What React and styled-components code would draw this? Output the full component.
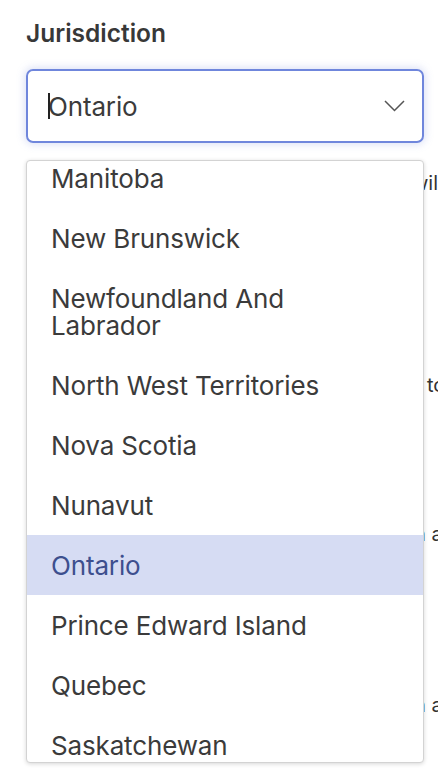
import React from "react";
import styled, { createGlobalStyle } from "styled-components";

const GlobalStyle = createGlobalStyle`
  html, body {
    margin: 0;
    overflow: hidden;
    background: #fff;
  }
  body {
    font-family: "Inter", "Noto Sans", sans-serif;
    color: #3b3b3b;
  }
`;

const Page = styled.div`
  padding: 18px 14px 0 26px;
  width: 438px;
  height: 778px;
  box-sizing: border-box;
`;

const Label = styled.div`
  font-size: 24.5px;
  line-height: 30px;
  font-weight: 600;
  color: #383838;
  margin-bottom: 21px;
`;

const Field = styled.div`
  position: relative;
`;

const Input = styled.div`
  height: 74px;
  box-sizing: border-box;
  border: 2px solid #6f86dc;
  border-radius: 7px;
  box-shadow: 0 0 8px 1px rgba(110, 132, 220, 0.28);
  display: flex;
  align-items: center;
  justify-content: space-between;
  padding: 0 17px 0 20px;
  font-size: 26px;
  letter-spacing: -0.15px;
  color: #3b3b3b;
`;

const Value = styled.div`
  display: flex;
  align-items: center;
`;

const Caret = styled.span`
  display: inline-block;
  width: 1.5px;
  height: 26px;
  background: #222;
  margin-right: -1.5px;
  position: relative;
  z-index: 1;
`;

const Menu = styled.div`
  position: absolute;
  top: calc(100% + 17px);
  left: 0;
  width: 398px;
  height: 603px;
  box-sizing: border-box;
  background: #fff;
  border: 1px solid #d3d3d3;
  border-radius: 4px;
  box-shadow: 0 1px 4px rgba(0, 0, 0, 0.16);
  overflow: hidden;
  z-index: 5;
`;

const List = styled.ul`
  list-style: none;
  margin: -13px 0 0;
  padding: 0;
`;

const Option = styled.li`
  font-size: 26px;
  line-height: 27px;
  letter-spacing: -0.15px;
  padding: 16.5px 40px 16.5px 24px;
  color: ${(p) => (p.$active ? "#3d4f8e" : "#3b3b3b")};
  background: ${(p) => (p.$active ? "#d6dcf3" : "transparent")};
`;

const Behind = styled.div`
  font-size: 20px;
  line-height: 24px;
  color: #333;
`;

const BackLine = styled.div`
  white-space: nowrap;
  margin-top: ${(p) => p.$gap}px;
  padding-left: ${(p) => p.$indent}px;
`;

const Chevron = () => (
  <svg width="21" height="12" viewBox="0 0 21 12" fill="none">
    <polyline points="1,1 10.5,10.5 20,1" stroke="#555" strokeWidth="1.5" />
  </svg>
);

const options = [
  "Manitoba",
  "New Brunswick",
  "Newfoundland And Labrador",
  "North West Territories",
  "Nova Scotia",
  "Nunavut",
  "Ontario",
  "Prince Edward Island",
  "Quebec",
  "Saskatchewan",
];

const selected = "Ontario";

export default function App() {
  return (
    <Page>
      <GlobalStyle />
      <Label>Jurisdiction</Label>
      <Field>
        <Input>
          <Value>
            <Caret />
            {selected}
          </Value>
          <Chevron />
        </Input>
        <Menu>
          <List>
            {options.map((o) => (
              <Option key={o} $active={o === selected}>
                {o}
              </Option>
            ))}
          </List>
        </Menu>
      </Field>
      <Behind>
        <BackLine $gap={28} $indent={386}>will</BackLine>
        <BackLine $gap={178} $indent={401}>to</BackLine>
        <BackLine $gap={125} $indent={388}>n a</BackLine>
        <BackLine $gap={147} $indent={388}>n a</BackLine>
      </Behind>
    </Page>
  );
}
